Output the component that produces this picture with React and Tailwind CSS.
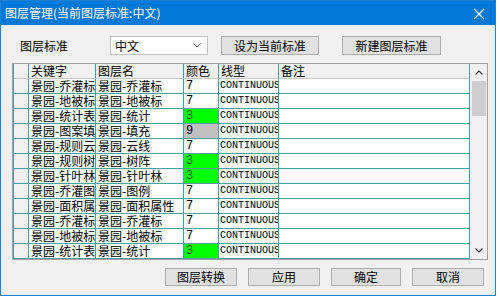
import React from 'react';

const rows = [
  ['景园-乔灌标注', '景园-乔灌标', '7'],
  ['景园-地被标注', '景园-地被标', '7'],
  ['景园-统计表', '景园-统计', '3'],
  ['景园-图案填充', '景园-填充', '9'],
  ['景园-规则云线', '景园-云线', '7'],
  ['景园-规则树阵', '景园-树阵', '3'],
  ['景园-针叶林', '景园-针叶林', '3'],
  ['景园-乔灌图例', '景园-图例', '7'],
  ['景园-面积属性', '景园-面积属性', '7'],
  ['景园-乔灌标注', '景园-乔灌标', '7'],
  ['景园-地被标注', '景园-地被标', '7'],
  ['景园-统计表', '景园-统计', '3'],
];

const cjk = { fontFamily: '"Noto Sans CJK SC", "Noto Sans", sans-serif' };
const mono = { fontFamily: '"Liberation Mono", "DejaVu Sans Mono", monospace' };

function colorCell(c) {
  if (c === '3') return 'bg-[#00ff00] text-[#1b6e1b]';
  if (c === '9') return 'bg-[#c0c0c0] text-black';
  return 'bg-white text-black';
}

function Btn({ children, className = '' }) {
  return (
    <button className={`h-[18px] bg-[#e1e1e1] border border-[#adadad] text-[12px] leading-none text-black flex items-center justify-center ${className}`}>
      {children}
    </button>
  );
}

export default function App() {
  // base cell without a font size so the linetype column can use its own
  const base = 'h-[15px] border-r border-b border-[#4f9f9f] overflow-hidden whitespace-nowrap leading-[14px]';
  const cell = `${base} text-[12px]`;
  const head = `${cell} bg-[#f0f0f0] border-b-[#c8c8c8] pl-[2px]`;
  return (
    <div className="w-[500px] h-[301px] bg-white" style={cjk}>
      <div className="w-[496px] h-[296px] border border-[#1883d7] bg-[#f0f0f0] flex flex-col">
        {/* title bar */}
        <div className="h-[24px] bg-[#0078d7] flex items-center justify-between pl-[4px] pr-[10px] text-white">
          <span className="text-[12px]">图层管理(当前图层标准:中文)</span>
          <svg width="12" height="12" viewBox="0 0 12 12" className="mt-[1px]">
            <path d="M1 1 L11 11 M11 1 L1 11" stroke="white" strokeWidth="1.2" />
          </svg>
        </div>

        {/* standard row */}
        <div className="flex items-center mt-[11px] h-[19px] text-[12px] text-black">
          <span className="ml-[19px] w-[90px]">图层标准</span>
          <div className="w-[98px] h-[19px] bg-white border border-[#c4c4c4] flex items-center justify-between pl-[4px] pr-[6px]">
            <span>中文</span>
            <svg width="8" height="5" viewBox="0 0 8 5">
              <path d="M0.5 0.5 L4 4 L7.5 0.5" stroke="#555" fill="none" strokeWidth="1" />
            </svg>
          </div>
          <Btn className="ml-[13px] w-[98px] h-[19px]">设为当前标准</Btn>
          <Btn className="ml-[23px] w-[99px] h-[19px]">新建图层标准</Btn>
        </div>

        {/* table */}
        <div className="ml-[11px] mt-[8px] w-[476px] h-[197px] border border-[#a0a0a0] bg-[#f0f0f0] flex">
          <div className="grid grid-cols-[15px_67px_88px_35px_60px_191px] content-start border-l border-[#4f9f9f]">
            <div className={head}></div>
            <div className={head}>关键字</div>
            <div className={head}>图层名</div>
            <div className={head}>颜色</div>
            <div className={head}>线型</div>
            <div className={head}>备注</div>
            {rows.map((r, i) => (
              <React.Fragment key={i}>
                <div className={`${cell} bg-[#f0f0f0]`}></div>
                <div className={`${cell} bg-white pl-[2px]`}>{r[0]}</div>
                <div className={`${cell} bg-white pl-[2px]`}>{r[1]}</div>
                <div className={`${cell} ${colorCell(r[2])} pl-[2px]`} style={mono}>{r[2]}</div>
                <div className={`${base} bg-white pl-[1px] text-[10px]`} style={mono}>CONTINUOUS</div>
                <div className={`${cell} bg-white`}></div>
              </React.Fragment>
            ))}
          </div>
          {/* scrollbar */}
          <div className="w-[17px] h-full bg-[#f0f0f0] flex flex-col items-center">
            <div className="h-[17px] w-full flex items-center justify-center">
              <svg width="8" height="5" viewBox="0 0 8 5">
                <path d="M0.5 4.5 L4 1 L7.5 4.5" stroke="#333" fill="none" strokeWidth="1.2" />
              </svg>
            </div>
            <div className="w-[14px] h-[35px] bg-[#cdcdcd]"></div>
            <div className="flex-1"></div>
            <div className="h-[17px] w-full flex items-center justify-center">
              <svg width="8" height="5" viewBox="0 0 8 5">
                <path d="M0.5 0.5 L4 4 L7.5 0.5" stroke="#333" fill="none" strokeWidth="1.2" />
              </svg>
            </div>
          </div>
        </div>

        {/* bottom buttons */}
        <div className="flex mt-[8px] ml-[164px] gap-[11px]">
          <Btn className="w-[72px]">图层转换</Btn>
          <Btn className="w-[72px]">应用</Btn>
          <Btn className="w-[70px] border-[#0078d7]">确定</Btn>
          <Btn className="w-[72px]">取消</Btn>
        </div>
      </div>
    </div>
  );
}
